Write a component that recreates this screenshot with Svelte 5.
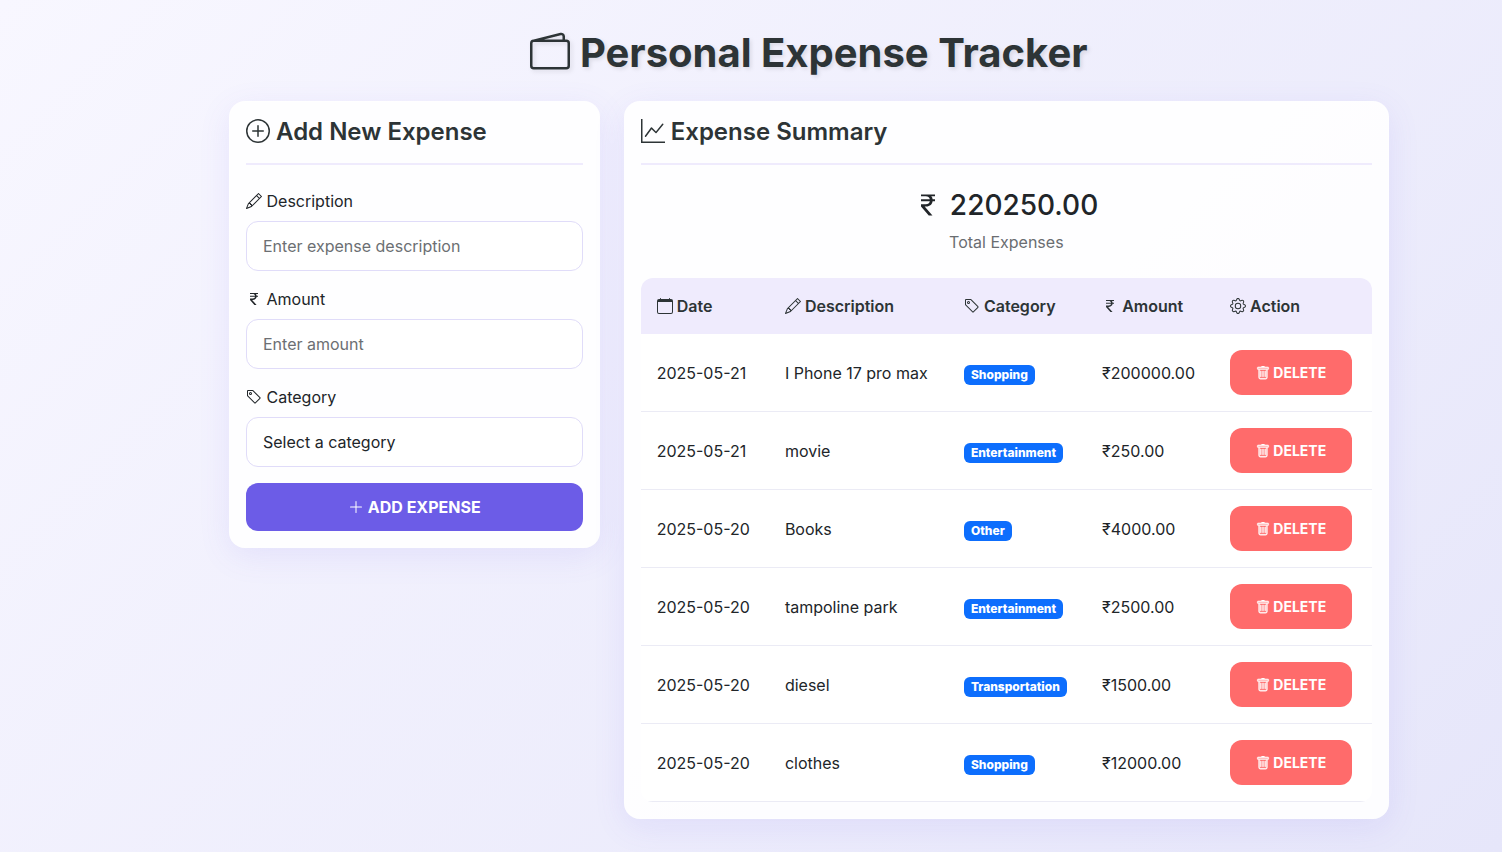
<script>
  const icons = {
    wallet: ['M12.136.326A1.5 1.5 0 0 1 14 1.78V3h.5A1.5 1.5 0 0 1 16 4.5v9a1.5 1.5 0 0 1-1.5 1.5h-13A1.5 1.5 0 0 1 0 13.5v-9a1.5 1.5 0 0 1 1.432-1.499zM5.562 3H13V1.78a.5.5 0 0 0-.621-.484zM1.5 4a.5.5 0 0 0-.5.5v9a.5.5 0 0 0 .5.5h13a.5.5 0 0 0 .5-.5v-9a.5.5 0 0 0-.5-.5z'],
    plusCircle: ['M8 15A7 7 0 1 1 8 1a7 7 0 0 1 0 14m0 1A8 8 0 1 0 8 0a8 8 0 0 0 0 16', 'M8 4a.5.5 0 0 1 .5.5v3h3a.5.5 0 0 1 0 1h-3v3a.5.5 0 0 1-1 0v-3h-3a.5.5 0 0 1 0-1h3v-3A.5.5 0 0 1 8 4'],
    graph: ['M0 0h1v15h15v1H0zm14.817 3.113a.5.5 0 0 1 .07.704l-4.5 5.5a.5.5 0 0 1-.74.037L7.06 6.767l-3.656 5.027a.5.5 0 0 1-.808-.588l4-5.5a.5.5 0 0 1 .758-.06l2.609 2.61 4.15-5.073a.5.5 0 0 1 .704-.07'],
    pencil: ['M12.146.146a.5.5 0 0 1 .708 0l3 3a.5.5 0 0 1 0 .708l-10 10a.5.5 0 0 1-.168.11l-5 2a.5.5 0 0 1-.65-.65l2-5a.5.5 0 0 1 .11-.168zM11.207 2.5 13.5 4.793 14.793 3.5 12.5 1.207zm1.586 3L10.5 3.207 4 9.707V10h.5a.5.5 0 0 1 .5.5v.5h.5a.5.5 0 0 1 .5.5v.5h.293zm-9.761 5.175-.106.106-1.528 3.821 3.821-1.528.106-.106A.5.5 0 0 1 5 12.5V12h-.5a.5.5 0 0 1-.5-.5V11h-.5a.5.5 0 0 1-.468-.325'],
    rupee: ['M4 3.06h2.726c1.22 0 2.12.575 2.325 1.724H4v1.051h5.051C8.855 7.001 8 7.558 6.788 7.558H4v1.317L8.437 14h2.11L6.095 8.884h.855c2.316-.018 3.465-1.476 3.688-3.049H12V4.784h-1.345c-.08-.778-.357-1.335-.793-1.732H12V2H4z'],
    tag: ['M6 4.5a1.5 1.5 0 1 1-3 0 1.5 1.5 0 0 1 3 0m-1 0a.5.5 0 1 0-1 0 .5.5 0 0 0 1 0', 'M2 1h4.586a1 1 0 0 1 .707.293l7 7a1 1 0 0 1 0 1.414l-4.586 4.586a1 1 0 0 1-1.414 0l-7-7A1 1 0 0 1 1 6.586V2a1 1 0 0 1 1-1m0 5.586 7 7L13.586 9l-7-7H2z'],
    plus: ['M8 2a.5.5 0 0 1 .5.5v5h5a.5.5 0 0 1 0 1h-5v5a.5.5 0 0 1-1 0v-5h-5a.5.5 0 0 1 0-1h5v-5A.5.5 0 0 1 8 2'],
    calendar: ['M3.5 0a.5.5 0 0 1 .5.5V1h8V.5a.5.5 0 0 1 1 0V1h1a2 2 0 0 1 2 2v11a2 2 0 0 1-2 2H2a2 2 0 0 1-2-2V3a2 2 0 0 1 2-2h1V.5a.5.5 0 0 1 .5-.5M1 4v10a1 1 0 0 0 1 1h12a1 1 0 0 0 1-1V4z'],
    gear: ['M8 4.754a3.246 3.246 0 1 0 0 6.492 3.246 3.246 0 0 0 0-6.492M5.754 8a2.246 2.246 0 1 1 4.492 0 2.246 2.246 0 0 1-4.492 0', 'M9.796 1.343c-.527-1.79-3.065-1.79-3.592 0l-.094.319a.873.873 0 0 1-1.255.52l-.292-.16c-1.64-.892-3.433.902-2.54 2.541l.159.292a.873.873 0 0 1-.52 1.255l-.319.094c-1.79.527-1.79 3.065 0 3.592l.319.094a.873.873 0 0 1 .52 1.255l-.16.292c-.892 1.64.901 3.434 2.541 2.54l.292-.159a.873.873 0 0 1 1.255.52l.094.319c.527 1.79 3.065 1.79 3.592 0l.094-.319a.873.873 0 0 1 1.255-.52l.292.16c1.64.893 3.434-.902 2.54-2.541l-.159-.292a.873.873 0 0 1 .52-1.255l.319-.094c1.79-.527 1.79-3.065 0-3.592l-.319-.094a.873.873 0 0 1-.52-1.255l.16-.292c.893-1.64-.902-3.433-2.541-2.54l-.292.159a.873.873 0 0 1-1.255-.52zm-2.633.283c.246-.835 1.428-.835 1.674 0l.094.319a1.873 1.873 0 0 0 2.693 1.115l.291-.16c.764-.415 1.6.42 1.184 1.185l-.159.292a1.873 1.873 0 0 0 1.116 2.692l.318.094c.835.246.835 1.428 0 1.674l-.319.094a1.873 1.873 0 0 0-1.115 2.693l.16.291c.415.764-.42 1.6-1.185 1.184l-.291-.159a1.873 1.873 0 0 0-2.693 1.116l-.094.318c-.246.835-1.428.835-1.674 0l-.094-.319a1.873 1.873 0 0 0-2.692-1.115l-.292.16c-.764.415-1.6-.42-1.184-1.185l.159-.291A1.873 1.873 0 0 0 1.945 8.93l-.319-.094c-.835-.246-.835-1.428 0-1.674l.319-.094A1.873 1.873 0 0 0 3.06 4.377l-.16-.292c-.415-.764.42-1.6 1.185-1.184l.292.159a1.873 1.873 0 0 0 2.692-1.115z'],
    trash: ['M5.5 5.5A.5.5 0 0 1 6 6v6a.5.5 0 0 1-1 0V6a.5.5 0 0 1 .5-.5m2.5 0a.5.5 0 0 1 .5.5v6a.5.5 0 0 1-1 0V6a.5.5 0 0 1 .5-.5m3 .5a.5.5 0 0 0-1 0v6a.5.5 0 0 0 1 0z', 'M14.5 3a1 1 0 0 1-1 1H13v9a2 2 0 0 1-2 2H5a2 2 0 0 1-2-2V4h-.5a1 1 0 0 1-1-1V2a1 1 0 0 1 1-1H6a1 1 0 0 1 1-1h2a1 1 0 0 1 1 1h3.5a1 1 0 0 1 1 1zM4.118 4 4 4.059V13a1 1 0 0 0 1 1h6a1 1 0 0 0 1-1V4.059L11.882 4zM2.5 3h11V2h-11z']
  };

  const columns = [
    { icon: 'calendar', label: 'Date' },
    { icon: 'pencil', label: 'Description' },
    { icon: 'tag', label: 'Category' },
    { icon: 'rupee', label: 'Amount' },
    { icon: 'gear', label: 'Action' }
  ];
  const categories = ['Shopping', 'Entertainment', 'Transportation', 'Other'];

  let expenses = $state([
    { id: 1, date: '2025-05-21', description: 'I Phone 17 pro max', category: 'Shopping', amount: 200000 },
    { id: 2, date: '2025-05-21', description: 'movie', category: 'Entertainment', amount: 250 },
    { id: 3, date: '2025-05-20', description: 'Books', category: 'Other', amount: 4000 },
    { id: 4, date: '2025-05-20', description: 'tampoline park', category: 'Entertainment', amount: 2500 },
    { id: 5, date: '2025-05-20', description: 'diesel', category: 'Transportation', amount: 1500 },
    { id: 6, date: '2025-05-20', description: 'clothes', category: 'Shopping', amount: 12000 }
  ]);
  let description = $state('');
  let amount = $state('');
  let category = $state('');
  let nextId = 7;
  const total = $derived(expenses.reduce((sum, e) => sum + e.amount, 0));

  function add(event) {
    event.preventDefault();
    const value = Number(amount);
    if (!description || !value || !category) return;
    const date = new Date().toISOString().slice(0, 10);
    expenses = [{ id: nextId++, date, description, category, amount: value }, ...expenses];
    description = '';
    amount = '';
    category = '';
  }

  function remove(id) {
    expenses = expenses.filter((e) => e.id !== id);
  }
</script>

{#snippet icon(name)}
  <svg class="icon {name}" viewBox="0 0 16 16" aria-hidden="true">
    {#each icons[name] as d}<path {d} />{/each}
  </svg>
{/snippet}

<main class="page">
  <div class="container">
    <h1>{@render icon('wallet')} Personal Expense Tracker</h1>

    <div class="columns">
      <section class="card entry">
        <h2>{@render icon('plusCircle')} Add New Expense</h2>
        <form onsubmit={add}>
          <div class="field">
            <label for="description">{@render icon('pencil')} Description</label>
            <input id="description" type="text" placeholder="Enter expense description" bind:value={description} />
          </div>
          <div class="field">
            <label for="amount">{@render icon('rupee')} Amount</label>
            <input id="amount" type="text" inputmode="decimal" placeholder="Enter amount" bind:value={amount} />
          </div>
          <div class="field">
            <label for="category">{@render icon('tag')} Category</label>
            <select id="category" bind:value={category}>
              <option value="">Select a category</option>
              {#each categories as c}<option value={c}>{c}</option>{/each}
            </select>
          </div>
          <button class="add" type="submit">{@render icon('plus')} ADD EXPENSE</button>
        </form>
      </section>

      <section class="card summary">
        <h2>{@render icon('graph')} Expense Summary</h2>
        <div class="total">
          <p class="sum">{@render icon('rupee')} {total.toFixed(2)}</p>
          <p class="caption">Total Expenses</p>
        </div>
        <div class="table-wrap">
          <table>
            <thead>
              <tr>
                {#each columns as col}<th scope="col">{@render icon(col.icon)} {col.label}</th>{/each}
              </tr>
            </thead>
            <tbody>
              {#each expenses as e (e.id)}
                <tr>
                  <td>{e.date}</td>
                  <td>{e.description}</td>
                  <td><span class="badge">{e.category}</span></td>
                  <td>₹{e.amount.toFixed(2)}</td>
                  <td><button class="delete" type="button" onclick={() => remove(e.id)}>{@render icon('trash')} DELETE</button></td>
                </tr>
              {/each}
            </tbody>
          </table>
        </div>
      </section>
    </div>
  </div>
</main>

<style>
  :global(body) {
    margin: 0;
  }

  .page,
  .page * {
    box-sizing: border-box;
  }

  .page {
    min-height: 100vh;
    padding: 29px 0 32px 116px;
    background: linear-gradient(135deg, #f8f7ff 0%, #e6e6fa 100%);
    color: #212529;
    font-family: Inter, 'Liberation Sans', sans-serif;
    font-size: 16px;
    line-height: 24px;
  }

  .container {
    max-width: 1160px;
    margin: 0 auto;
  }

  .icon {
    width: 1em;
    height: 1em;
    fill: currentColor;
    vertical-align: -0.125em;
  }

  h1 {
    margin: 0 0 24px;
    color: #2d3436;
    font-size: 40px;
    font-weight: 700;
    line-height: 48px;
    text-align: center;
    text-shadow: 2px 2px 4px rgba(0, 0, 0, 0.1);
  }

  h1 .icon {
    filter: drop-shadow(2px 2px 2px rgba(0, 0, 0, 0.1));
  }

  .columns {
    display: grid;
    grid-template-columns: repeat(12, minmax(0, 1fr));
    gap: 24px;
    align-items: start;
  }

  .card {
    padding: 16px;
    border: 1px solid rgba(255, 255, 255, 0.2);
    border-radius: 16px;
    background: rgba(255, 255, 255, 0.9);
    box-shadow: 0 8px 32px rgba(108, 92, 231, 0.1);
  }

  .entry {
    grid-column: span 4;
  }

  .summary {
    grid-column: span 8;
  }

  h2 {
    margin: 0 0 24px;
    padding-bottom: 17px;
    border-bottom: 2px solid #efebfd;
    color: #2d3436;
    font-size: 24px;
    font-weight: 600;
    line-height: 28px;
  }

  .field {
    margin-bottom: 16px;
  }

  label {
    display: block;
    margin-bottom: 8px;
  }

  input,
  select {
    display: block;
    width: 100%;
    height: 50px;
    padding: 12px 16px;
    border: 1px solid #e0dcf9;
    border-radius: 12px;
    background: #fff;
    color: #212529;
    font: inherit;
    appearance: none;
  }

  input::placeholder {
    color: #6c6f73;
    opacity: 1;
  }

  button {
    padding: 12px 26px;
    border: 0;
    border-radius: 12px;
    color: #fff;
    font-family: inherit;
    font-weight: 700;
    cursor: pointer;
  }

  .add {
    width: 100%;
    background: #6c5ce7;
    font-size: 16px;
    line-height: 24px;
  }

  .total {
    margin-bottom: 24px;
    text-align: center;
  }

  .sum {
    margin: 0 0 8px;
    font-size: 28px;
    font-weight: 500;
    line-height: 33px;
  }

  .caption {
    margin: 0;
    color: #6a6d71;
  }

  .table-wrap {
    overflow: hidden;
    border-radius: 12px;
  }

  table {
    width: 100%;
    border-collapse: collapse;
    background: #fff;
  }

  th,
  td {
    padding: 16px;
    text-align: left;
    vertical-align: middle;
    white-space: nowrap;
  }

  th {
    background: #efebfd;
    color: #2d3436;
    font-weight: 600;
  }

  tbody tr {
    border-bottom: 1px solid #ebebf5;
  }

  .badge {
    display: inline-block;
    padding: 4px 7px;
    border-radius: 6px;
    background: #0d6efd;
    color: #fff;
    font-size: 12px;
    font-weight: 800;
    line-height: 12px;
    vertical-align: baseline;
  }

  .delete {
    display: block;
    background: #ff6b6b;
    font-size: 14px;
    line-height: 21px;
  }

  .trash {
    stroke: currentColor;
    stroke-width: 0.5;
  }
</style>
